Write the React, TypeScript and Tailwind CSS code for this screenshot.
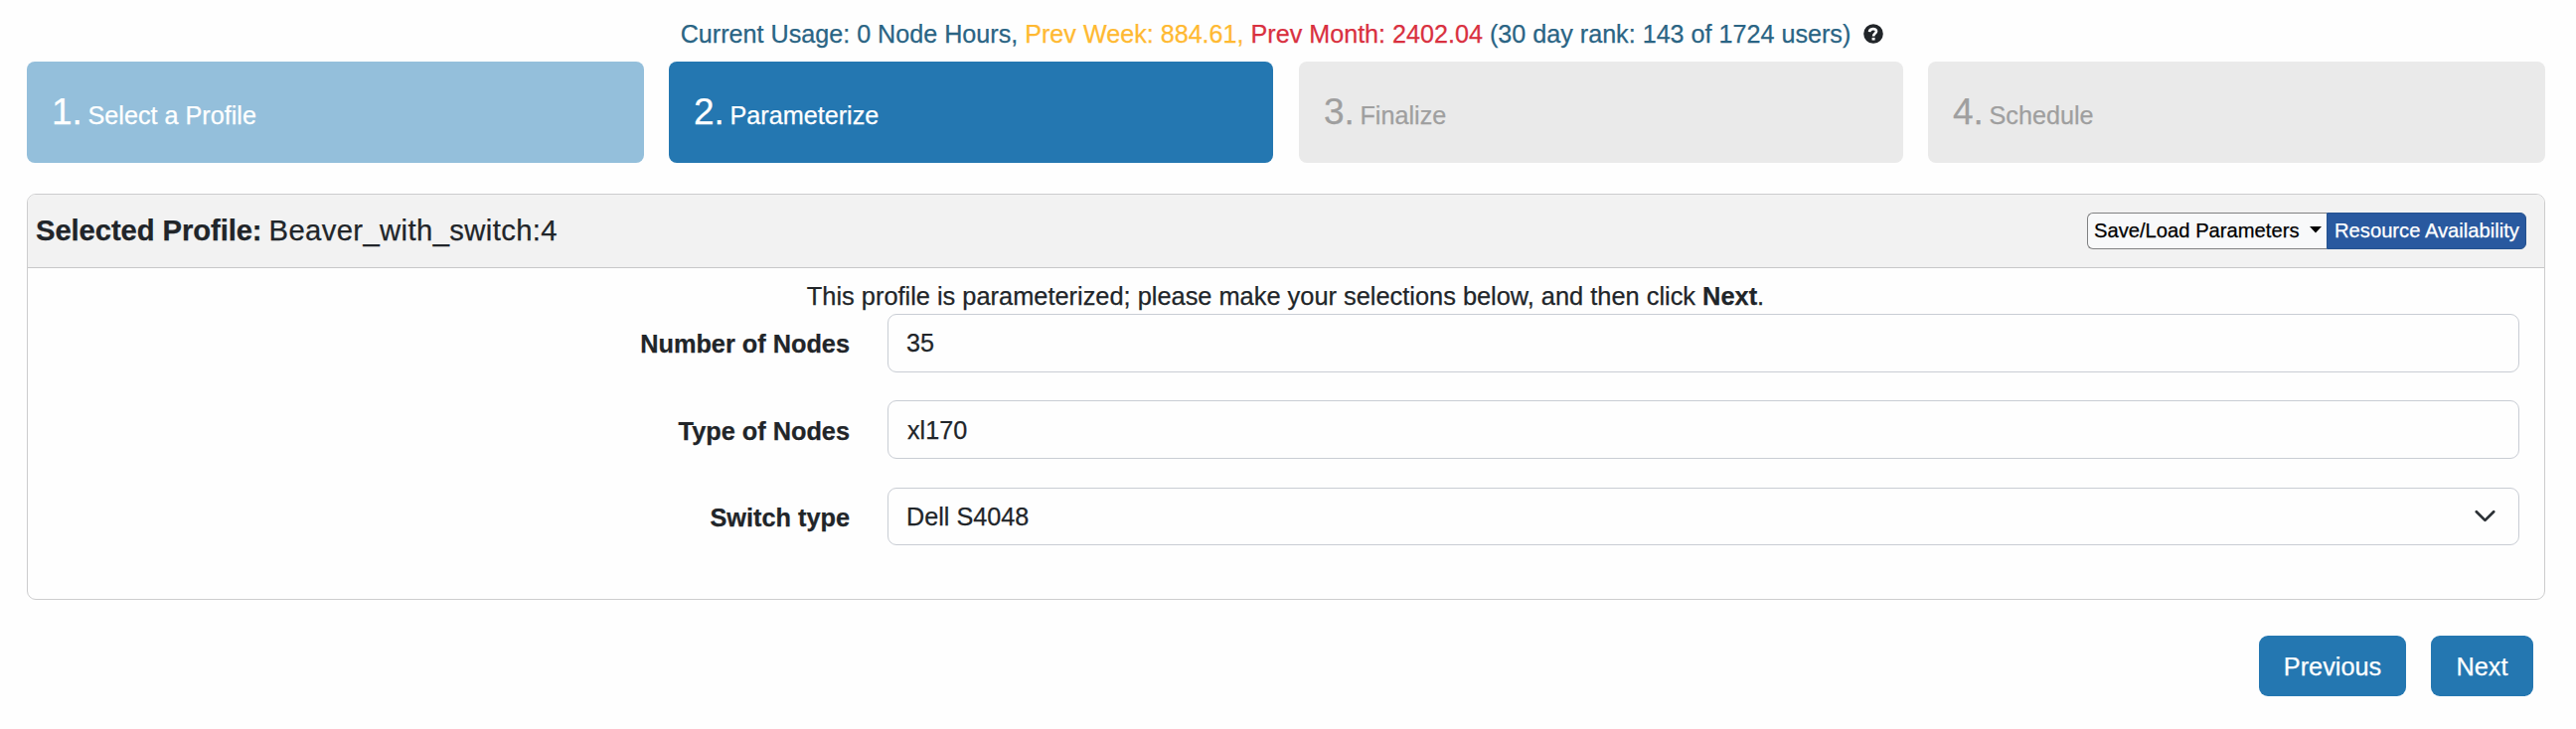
import React from "react";

type StepProps = { number: number; title: string; box: string };

const steps: StepProps[] = [
  { number: 1, title: "Select a Profile", box: "w-[621px] bg-[#94bfdb] text-white" },
  { number: 2, title: "Parameterize", box: "ml-[25px] w-[608px] bg-[#2477b1] text-white" },
  { number: 3, title: "Finalize", box: "ml-[26px] w-[608px] bg-[#eaeaea] text-[#9f9f9f]" },
  { number: 4, title: "Schedule", box: "ml-[25px] w-[621px] bg-[#eaeaea] text-[#9f9f9f]" },
];

function Step({ number, title, box }: StepProps) {
  return (
    <li className={`flex h-[102px] items-baseline gap-[6px] rounded-[8px] pt-[32px] pl-[25px] leading-[38px] ${box}`}>
      <span className="text-[37px] tracking-[-0.2px]">{number}.</span>
      <span className="text-[25.2px]">{title}</span>
    </li>
  );
}

function HelpIcon() {
  return (
    <svg className="ml-[13px] size-[20px]" viewBox="0 0 20 20" fill="none">
      <circle cx="10" cy="10" r="9.8" fill="#212529" />
      <path d="M6.1 8.1C6.2 4.4 13 4 13 7.5C13 9.6 10.1 9.4 10.1 12.6" stroke="#fefefe" strokeWidth="2.7" />
      <rect x="8.6" y="13.9" width="3" height="2.6" fill="#fefefe" />
    </svg>
  );
}

function Field({ label, labelClass, children }: { label: string; labelClass: string; children: React.ReactNode }) {
  return (
    <div className="flex">
      <label className={`w-[827px] text-right text-[25.3px] leading-[38px] font-bold ${labelClass}`}>{label}</label>
      <div className="ml-[38px] w-[1642px]">{children}</div>
    </div>
  );
}

export default function App() {
  return (
    <div className="h-[734px] w-[2592px] overflow-hidden bg-[#fefefe] font-['Liberation_Sans',Arial,sans-serif] text-[25.2px] text-[#212529] [-webkit-text-stroke:0.25px]">
      <div className="flex h-[62px] items-center justify-center pt-[6px] pr-[12px] text-[25.15px] text-[#2a6484]">
        <p className="leading-[38px] whitespace-pre">
          Current Usage: 0 Node Hours, <span className="text-[#ffb931]">Prev Week: 884.61, </span>
          <span className="text-[#d9303f]">Prev Month: 2402.04 </span>(30 day rank: 143 of 1724 users)
        </p>
        <HelpIcon />
      </div>

      <ol className="flex pl-[27px]">
        {steps.map((step) => (
          <Step key={step.number} {...step} />
        ))}
      </ol>

      <section className="mt-[31px] ml-[27px] h-[409px] w-[2534px] rounded-[9px] border border-[#cdcdce]">
        <header className="flex h-[74px] items-center justify-between rounded-t-[8px] border-b border-[#c8c8c9] bg-[#f2f2f2] pr-[18px] pl-[8px]">
          <h1 className="flex pb-[2px] text-[29.25px] leading-[38px]">
            <b className="tracking-[-0.1px]">Selected Profile:</b>
            <span className="ml-[7px] tracking-[0.38px]">Beaver_with_switch:4</span>
          </h1>
          <div className="flex h-[37px] text-[20.2px] leading-[35px]">
            <button className="flex w-[241px] rounded-l-[6px] border border-r-0 border-[#808182] bg-[#f8f9fa] pl-[6px] whitespace-nowrap text-black">
              Save/Load Parameters
              <svg className="mt-[13px] ml-[11px] h-[7px] w-[12px]" viewBox="0 0 12 7">
                <path d="M0 0H12L6 6.5Z" fill="#000" />
              </svg>
            </button>
            <button className="w-[201px] rounded-r-[6px] border border-[#25528f] bg-[#29599f] pl-[7px] text-left whitespace-nowrap text-white">
              Resource Availability
            </button>
          </div>
        </header>

        <p className="mt-[9px] h-[37px] pr-[1px] text-center text-[25.38px] leading-[38px]">
          This profile is parameterized; please make your selections below, and then click <b>Next</b>.
        </p>

        <form className="flex flex-col gap-[28px]">
          <Field label="Number of Nodes" labelClass="pt-[11px]">
            <input
              readOnly
              value="35"
              className="block h-[59px] w-full rounded-[9px] border border-[#c9cdd4] bg-[#fefefe] px-[18px] outline-none"
            />
          </Field>
          <Field label="Type of Nodes" labelClass="pt-[12px]">
            <input
              readOnly
              value="xl170"
              className="block h-[59px] w-full rounded-[9px] border border-[#c9cdd4] bg-[#fefefe] px-[19px] pt-[2px] outline-none"
            />
          </Field>
          <Field label="Switch type" labelClass="pt-[12px]">
            <div className="mt-px flex h-[58px] w-full items-center justify-between rounded-[9px] border border-[#c9cdd4] bg-[#fefefe] pr-[23px] pl-[18px]">
              <span className="pt-[2px]">Dell S4048</span>
              <svg className="h-[14px] w-[21px]" viewBox="0 0 21 14" fill="none">
                <path d="M1.8 2.2L10.5 10.9L19.2 2.2" stroke="#2b3035" strokeWidth="2.7" strokeLinecap="round" strokeLinejoin="round" />
              </svg>
            </div>
          </Field>
        </form>
      </section>

      <div className="mt-[36px] mr-[43px] flex justify-end gap-[25px] text-[25.3px] leading-[61px] text-white">
        <button className="h-[61px] w-[148px] rounded-[9px] bg-[#2477b1] pt-px">Previous</button>
        <button className="h-[61px] w-[103px] rounded-[9px] bg-[#2477b1] pt-px">Next</button>
      </div>
    </div>
  );
}
